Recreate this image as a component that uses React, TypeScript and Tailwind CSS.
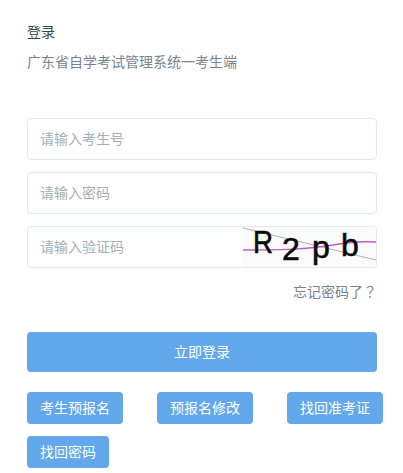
import React from 'react';

const font = { fontFamily: '"Liberation Sans", "Noto Sans CJK SC", sans-serif' };

const inputClass =
  'h-[42px] rounded-[4px] border border-[#e4e9ec] bg-white px-3 text-sm text-[#333] outline-none placeholder:text-[#a3afb7]';

const links = ['考生预报名', '预报名修改', '找回准考证', '找回密码'];

const Captcha = () => (
  <svg width="133" height="40" viewBox="0 0 133 40" className="block shrink-0">
    <rect width="133" height="40" fill="#fbfbfb" />
    <path d="M0 1 L133 33" stroke="#b5aeb0" strokeWidth="1.2" fill="none" />
    <path d="M0 23 C 30 23 60 23 90 18 S 120 15 133 15" stroke="#c05cc8" strokeWidth="1.4" fill="none" />
    <g fill="#0b0b0b" stroke="#0b0b0b" strokeWidth="0.6" fontFamily='"Liberation Sans", sans-serif' fontSize="32">
      <text x="10" y="26" textLength="20" lengthAdjust="spacingAndGlyphs">R</text>
      <text x="39" y="33">2</text>
      <text x="69" y="31">p</text>
      <text x="98" y="29">b</text>
    </g>
  </svg>
);

export default function App() {
  return (
    <div style={font} className="h-[473px] w-[403px] overflow-hidden bg-white pl-[27px] pt-[22px]">
      <div className="w-[350px]">
        <h1 className="text-sm leading-5 font-normal text-[#37474f]">登录</h1>
        <p className="mt-[10px] text-sm leading-5 text-[#76838f]">广东省自学考试管理系统一考生端</p>

        <div className="mt-[46px] flex flex-col gap-3">
          <input className={inputClass} placeholder="请输入考生号" />
          <input className={inputClass} placeholder="请输入密码" />
          <div className="flex h-[42px] overflow-hidden rounded-[4px] border border-[#e4e9ec]">
            <input
              className="h-full min-w-0 flex-1 bg-white px-3 text-sm outline-none placeholder:text-[#a3afb7]"
              placeholder="请输入验证码"
            />
            <Captcha />
          </div>
        </div>

        <div className="mt-[13px] h-5 text-right text-sm leading-5 text-[#76838f]">
          忘记密码了<span className="font-['Noto_Sans_CJK_TC']">？</span>
        </div>

        <button className="mt-[31px] block h-10 w-full rounded-[4px] bg-[#62a8ea] text-sm text-white">
          立即登录
        </button>
      </div>

      <div className="mt-5 flex w-[376px] flex-wrap gap-x-[34px] gap-y-3">
        {links.map((label) => (
          <button key={label} className="h-8 rounded-[4px] bg-[#62a8ea] px-[13px] text-sm text-white">
            {label}
          </button>
        ))}
      </div>
    </div>
  );
}
